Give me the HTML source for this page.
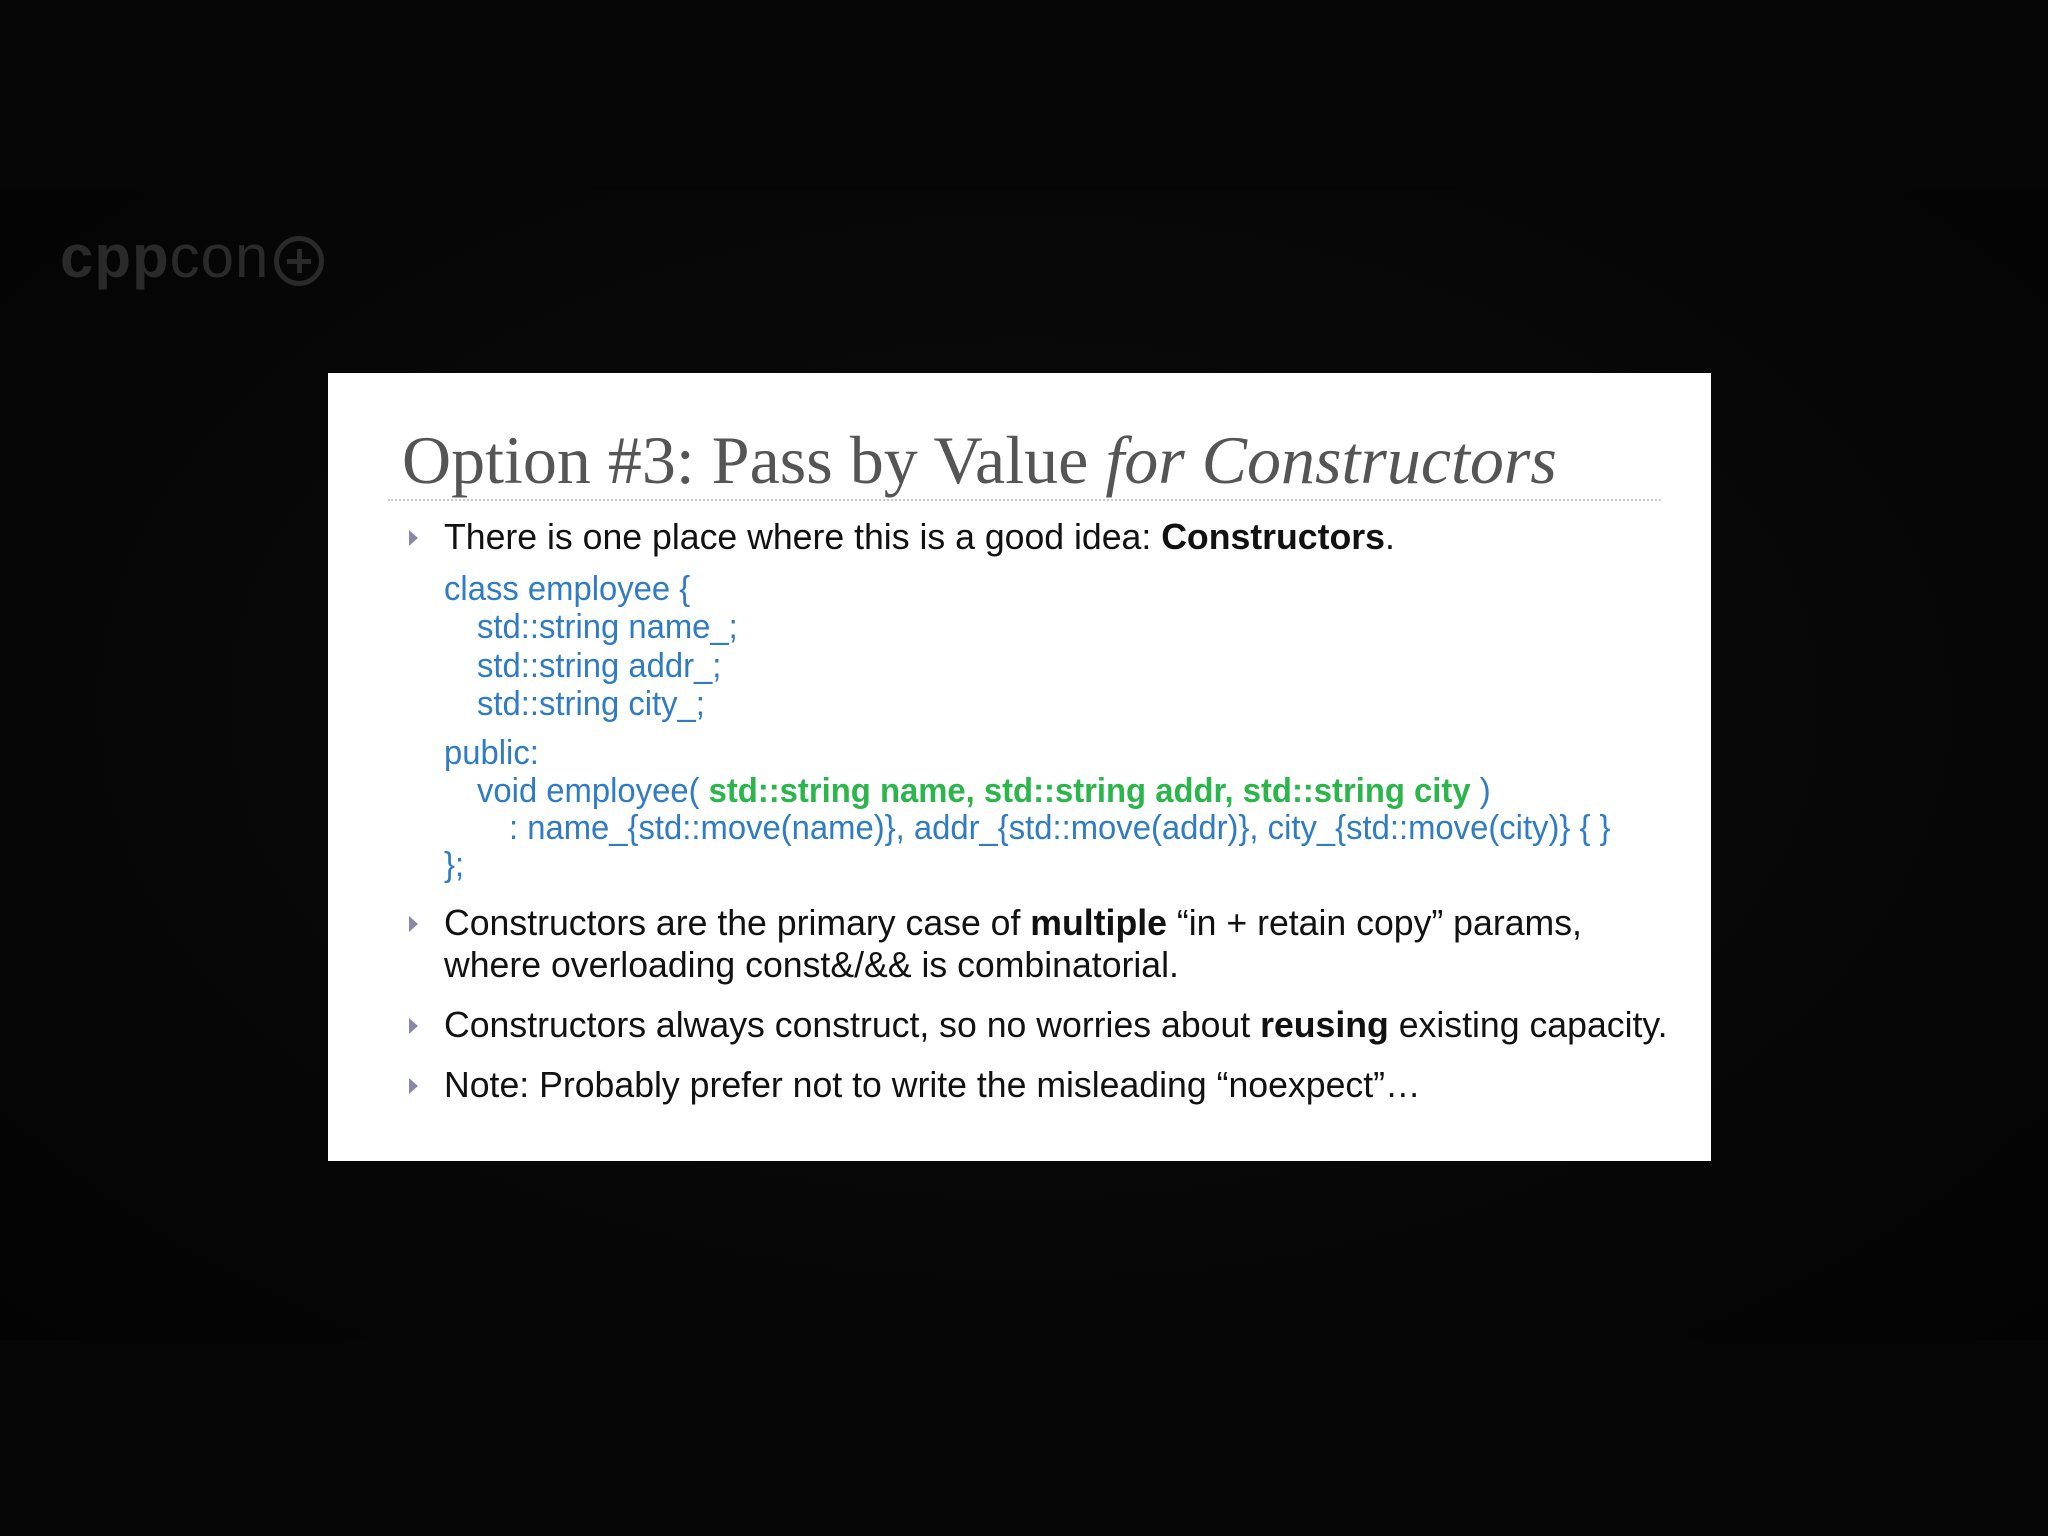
<!DOCTYPE html>
<html><head><meta charset="utf-8"><style>
html,body{margin:0;padding:0}
body{width:2048px;height:1536px;background:#050505;position:relative;overflow:hidden;font-family:"Liberation Sans",sans-serif}
.bg{position:absolute;left:0;top:190px;width:2048px;height:1150px;background:radial-gradient(ellipse at 50% 45%,#0c0c0c 0%,#070707 60%,#030303 100%)}
.logo{position:absolute;left:60px;top:222px;font-size:60px;color:#2a2a2a;letter-spacing:1px;font-family:"Liberation Sans",sans-serif}
.logo b{font-weight:bold}
.circ{position:absolute;left:274px;top:236px;width:40px;height:40px;border:5px solid #2a2a2a;border-radius:50%}
.circ:before{content:"";position:absolute;left:18px;top:8px;width:5px;height:24px;background:#2a2a2a}
.circ:after{content:"";position:absolute;left:8px;top:18px;width:24px;height:5px;background:#2a2a2a}
.slide{position:absolute;left:328px;top:373px;width:1383px;height:788px;background:#fff}
.t{position:absolute;white-space:pre;transform-origin:0 0;line-height:1}
.title{left:74px;top:53px;font-family:"Liberation Serif",serif;font-size:68px;color:#555}
.rule{position:absolute;left:60px;top:126px;width:1273px;border-top:2px dotted #c8c8c8}
.b{font-size:36px;color:#111;transform:scaleX(0.99)}
.c{font-size:34px;color:#2f7cc4;transform:scaleX(0.965)}
.g{color:#2bb64b;font-weight:bold}
.tri{position:absolute;left:81px;width:0;height:0;border-top:8px solid transparent;border-bottom:8px solid transparent;border-left:9px solid #8a88a8}
</style></head><body>
<div class="bg"></div>
<div class="logo"><b>cpp</b>con</div>
<div class="circ"></div>
<div class="slide">
<div class="t title">Option #3: Pass by Value <i>for Constructors</i></div>
<div class="rule"></div>

<div class="tri" style="top:157px"></div>
<div class="t b" style="left:116px;top:146px">There is one place where this is a good idea: <b>Constructors</b>.</div>

<div class="t c" style="left:116px;top:199px">class employee {</div>
<div class="t c" style="left:149px;top:237px">std::string name_;</div>
<div class="t c" style="left:149px;top:276px">std::string addr_;</div>
<div class="t c" style="left:149px;top:314px">std::string city_;</div>
<div class="t c" style="left:116px;top:363px">public:</div>
<div class="t c" style="left:149px;top:401px">void employee( <span class="g">std::string name, std::string addr, std::string city</span> )</div>
<div class="t c" style="left:181px;top:438px">: name_{std::move(name)}, addr_{std::move(addr)}, city_{std::move(city)} { }</div>
<div class="t c" style="left:116px;top:475px">};</div>

<div class="tri" style="top:543px"></div>
<div class="t b" style="left:116px;top:532px">Constructors are the primary case of <b>multiple</b> “in + retain copy” params,</div>
<div class="t b" style="left:116px;top:574px">where overloading const&amp;/&amp;&amp; is combinatorial.</div>

<div class="tri" style="top:645px"></div>
<div class="t b" style="left:116px;top:634px">Constructors always construct, so no worries about <b>reusing</b> existing capacity.</div>

<div class="tri" style="top:705px"></div>
<div class="t b" style="left:116px;top:694px">Note: Probably prefer not to write the misleading “noexpect”…</div>
</div>
</body></html>
